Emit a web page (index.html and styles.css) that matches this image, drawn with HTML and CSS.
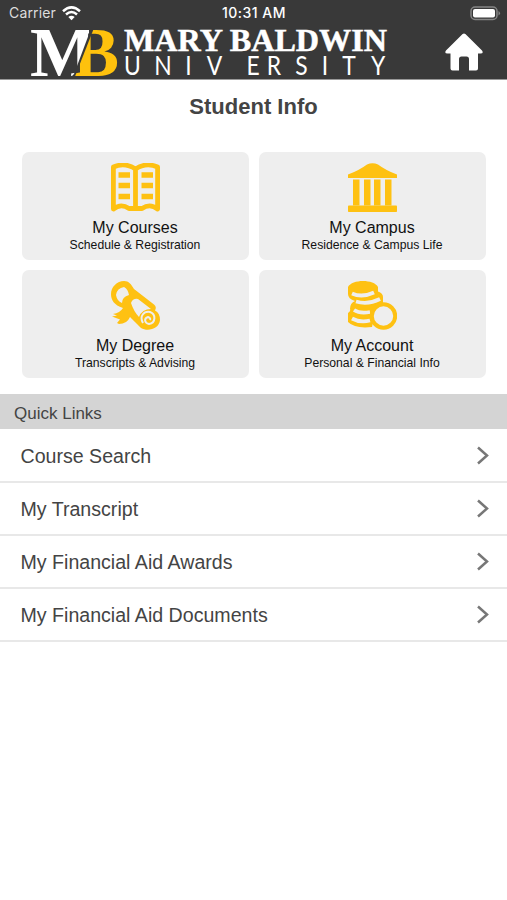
FILE: index.html
```html
<!DOCTYPE html>
<html lang="en">
<head>
<meta charset="utf-8">
<title>Student Info</title>
<link rel="stylesheet" href="styles.css">
</head>
<body>
<header class="header">
  <div class="status">
    <span class="carrier">Carrier
      <svg width="19" height="15" viewBox="0 0 19 15" fill="none" stroke="#fff" stroke-width="2.500"><path d="M1 5.200Q9.500-2.500 18 5.200M4 8.500Q9.500 3.500 15 8.500"/><path d="M6.300 11Q9.500 8.300 12.700 11L9.500 14.300Z" fill="#fff" stroke="none"/></svg>
    </span>
    <time class="time">10:31 AM</time>
    <svg class="battery" width="32" height="15" viewBox="0 0 32 15"><rect x="2" y="1" width="26" height="12.500" rx="4" fill="none" stroke="#858585" stroke-width="1.500"/><rect x="4" y="3" width="22" height="8.500" rx="2" fill="#fff"/><path d="M29.500 5Q32.500 7.200 29.500 9.500Z" fill="#858585"/></svg>
  </div>
  <div class="brand">
    <svg class="logo" width="360" height="51" viewBox="0 0 360 51" role="img" aria-label="Mary Baldwin University">
      <defs>
        <clipPath id="mClip"><path d="M0 0H59V6L44 46L41 49H0Z"/></clipPath>
        <clipPath id="bClip"><path d="M64 0H92V51H44Z"/></clipPath>
      </defs>
      <g clip-path="url(#mClip)"><text class="mono white" x="0" y="47.500" textLength="66" lengthAdjust="spacingAndGlyphs">M</text></g>
      <g clip-path="url(#bClip)"><text class="mono gold" x="43" y="47.500" textLength="46" lengthAdjust="spacingAndGlyphs">B</text></g>
      <text class="name" x="94" y="22.500" textLength="263" lengthAdjust="spacingAndGlyphs">MARY BALDWIN</text>
      <text class="univ" transform="scale(.88 1)" text-anchor="middle" y="47.500" x="116.500 151.100 180.100 209.700 253.400 277.300 308.500 335.200 362.500 395.500">UNIVERSITY</text>
    </svg>
    <svg class="home" width="38" height="38" viewBox="0 0 38 38" fill="#fff"><path d="M17.600 1Q19 0 20.400 1L37 17.500Q39 20.500 35.500 20.500H33V35.500Q33 37.500 31 37.500H24V26Q24 23.500 21.500 23.500H16.500Q14 23.500 14 26V37.500H7.500Q5.500 37.500 5.500 35.500V20.500H2.500Q-1 20.500 1 17.500Z"/></svg>
  </div>
</header>
<main>
  <h1 class="title">Student Info</h1>
  <section class="cards">
    <a class="card">
      <svg width="49" height="49" viewBox="0 0 49 49" fill="none" stroke="#fec112" stroke-width="4.800" stroke-linejoin="round"><path d="M24.500 6Q14-1 2.400 4V46Q10 40 18 45.500H31Q39 40 46.600 46V4Q35-1 24.500 6V45"/><path d="M7.500 12H19M7.500 22.500H19M7.500 33.500H19M30.500 12H42M30.500 22.500H42M30.500 33.500H42" stroke-width="5.500"/></svg>
      <b class="card-title">My Courses</b><span class="card-sub">Schedule &amp; Registration</span>
    </a>
    <a class="card">
      <svg width="49" height="49" viewBox="0 0 49 49" fill="#fec112"><path d="M0 15V11.500Q11 7.500 19 1.500Q24.500-1 30 1.500Q38 7.500 49 11.500V15Z"/><rect x="5" y="16.500" width="6.500" height="26"/><rect x="16" y="16.500" width="6.500" height="26"/><rect x="26" y="16.500" width="6.500" height="26"/><rect x="37" y="16.500" width="6.500" height="26"/><rect y="42.500" width="49" height="6.500" rx=".8"/></svg>
      <b class="card-title">My Campus</b><span class="card-sub">Residence &amp; Campus Life</span>
    </a>
    <a class="card">
      <svg width="49" height="49" viewBox="0 0 49 49"><path fill="#fec112" fill-rule="evenodd" d="M0 13C0 6 6 0 13 0C18 0 20 3 23 8L43 23.500Q46 26 44 29.500Q49 32 49 39C48 48 37 51 30 47L19 36Q16 43 8 43L6 42L9 38.500L1 35.500L6 34.500L2 33Q9 32 12 27C3 24 0 19 0 13ZM5 14Q6 7 13 6Q17 8 18 14Q11 16 11 22Q6 20 5 14ZM20 22Q22 17 27 18L40 28Q31 28 28 36Q23 31 20 22Z"/><path d="M32 42C28 35 33 30 39 31C45 33 45 42 38 43C33 42 33 37 37 36Q40 37 39 39" fill="none" stroke="#eee" stroke-width="2"/></svg>
      <b class="card-title">My Degree</b><span class="card-sub">Transcripts &amp; Advising</span>
    </a>
    <a class="card">
      <svg width="49" height="49" viewBox="0 0 49 49"><path fill="#fec112" d="M0 6C4-2 26-2 30 6V10.500Q35 12 35 16V23H29L24 46Q7 48 0 41V32Q3 30 2 28Q2 22 7 20Q0 18 0 13Z"/><path fill="none" stroke="#eee" stroke-width="3.800" d="M4 12.500Q14 17 26 11.500M8 20.500Q20 24 32 18M6 29Q12 33 22 31M4 37.500Q12 42 22 39.500"/><circle cx="35.500" cy="35" r="11.700" fill="#eee" stroke="#fec112" stroke-width="4"/></svg>
      <b class="card-title">My Account</b><span class="card-sub">Personal &amp; Financial Info</span>
    </a>
  </section>
  <h2 class="section">Quick Links</h2>
  <nav class="links">
    <a>Course Search<svg width="12" height="19" viewBox="0 0 12 19"><path d="M1 1.500L10 9.500L1 17.500"/></svg></a>
    <a>My Transcript<svg width="12" height="19" viewBox="0 0 12 19"><path d="M1 1.500L10 9.500L1 17.500"/></svg></a>
    <a>My Financial Aid Awards<svg width="12" height="19" viewBox="0 0 12 19"><path d="M1 1.500L10 9.500L1 17.500"/></svg></a>
    <a>My Financial Aid Documents<svg width="12" height="19" viewBox="0 0 12 19"><path d="M1 1.500L10 9.500L1 17.500"/></svg></a>
  </nav>
</main>
</body>
</html>
```
FILE: styles.css
```css
* { box-sizing: border-box; }
body { margin: 0; background: #fff; font-family: "Liberation Sans", Arial, sans-serif; color: #444; }
.header { height: 80px; background: #393939; border-bottom: 1px solid #999; }
.status { height: 28px; padding: 0 6px 2px 9px; display: grid; grid-template-columns: 1fr auto 1fr; align-items: center; color: #fff; font: 14px/26px Inter, sans-serif; }
.carrier { display: flex; align-items: center; gap: 6px; color: #ddd; letter-spacing: .15px; }
.time { font-weight: 500; font-size: 14px; letter-spacing: .5px; margin-right: 2px; }
.battery { justify-self: end; }
.brand { height: 51px; display: flex; justify-content: space-between; align-items: flex-start; padding: 0 24px 0 30px; }
.logo { overflow: visible; }
.home { margin-top: 5px; }
.mono { font: bold 70px "Liberation Serif", serif; }
.white { fill: #fff; }
.gold { fill: #fec10d; }
.name { font: bold 31px "Liberation Serif", serif; fill: #fff; stroke: #fff; stroke-width: .5; }
.univ { font: 26px Lato, sans-serif; fill: #fff; }
.title { margin: 0; height: 71.5px; padding-top: 13px; text-align: center; font-size: 22px; line-height: 27px; }
.cards { display: grid; grid-template-columns: 227px 227px; grid-auto-rows: 108.5px; gap: 9.5px 10px; padding-left: 22px; height: 242.5px; }
.card { background: #eee; border-radius: 7px; padding: 11.5px 1px 0 0; display: flex; flex-direction: column; align-items: center; color: #111; }
.card-title { font-weight: 400; font-size: 16px; line-height: 18px; margin-top: 7px; }
.card-sub { font-size: 12.2px; line-height: 14px; margin-top: .5px; }
.section { margin: 0; height: 35px; background: #d4d4d4; padding-left: 14px; font-size: 17px; line-height: 39px; font-weight: 400; }
.links a { height: 53px; display: flex; align-items: center; justify-content: space-between; padding: 2px 18px 0 20.5px; border-bottom: 2px solid #e8e8e8; font-size: 19.6px; }
.links a:first-child { height: 54px; }
.links svg { margin-top: -2px; }
.links path { fill: none; stroke: #777; stroke-width: 2.5; }
```
